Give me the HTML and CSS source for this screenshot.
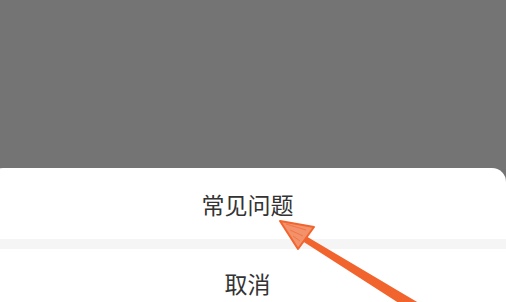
FILE: index.html
```html
<html>
    <head>
        <meta name="viewport" content="width=device-width, initial-scale=1">
        <title>常见问题</title>
        <link rel="stylesheet" href="styles.css">
    </head>
    <body>
        <div class="mask">
            <div class="mask-top"></div>
            <div class="sheet">
                <div class="sheet-item">常见问题</div>
                <div class="sheet-gap"></div>
                <div class="sheet-item last">取消</div>
            </div>
        </div>
        <!-- 标注箭头 -->
        <svg class="arrow" width="506" height="302" viewBox="0 0 506 302">
            <polygon points="301.6,233.4 418,302.5 412,311.5 298.4,238.6" fill="#f2642e"/>
            <polygon points="280,221 314,227 298,249" fill="#f3916a" stroke="#f2642e" stroke-width="2" stroke-linejoin="round"/>
            <path d="M286,224 L306,230 M290,230 L303,236 M293,236 L300,241" stroke="#f2642e" stroke-width="1" opacity="0.6"/>
        </svg>
    </body>
</html>
```
FILE: styles.css
```css
body {
    margin: 0;
    width: 506px;
    height: 302px;
    overflow: hidden;
    background: #747474;
    font-family: "Noto Sans CJK SC", "Noto Sans", sans-serif;
    position: relative;
}
.mask {
    display: flex;
    flex-direction: column;
}
.mask-top {
    height: 168px;
}
.sheet {
    margin-left: -11px;
    width: 517px;
    background: #fff;
    border-radius: 14px 14px 0 0;
}
.sheet-item {
    height: 71px;
    display: flex;
    align-items: center;
    justify-content: center;
    font-size: 23px;
    color: #333;
}
.sheet-item.last {
    height: 53px;
    align-items: flex-start;
    padding-top: 17px;
    box-sizing: border-box;
}
.sheet-gap {
    height: 10px;
    background: #f5f5f5;
}
.arrow {
    position: absolute;
    left: 0;
    top: 0;
}
```
